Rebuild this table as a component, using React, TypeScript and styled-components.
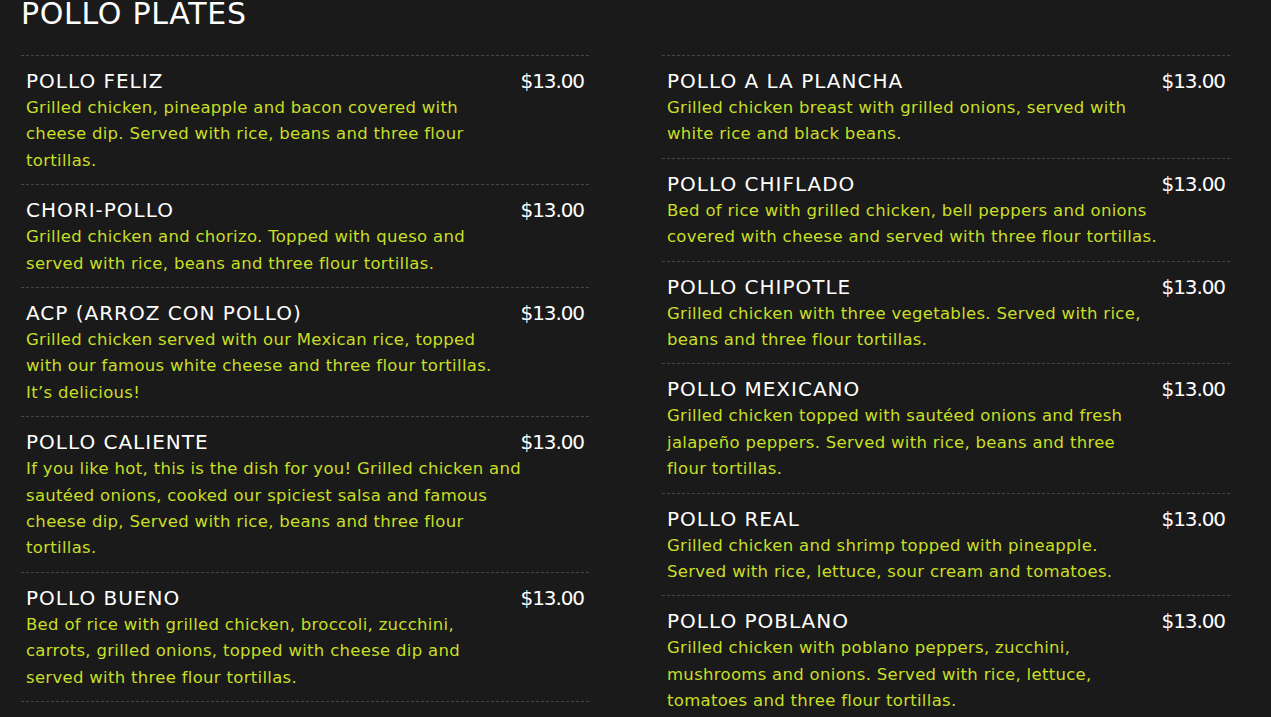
import React from "react";
import styled, { createGlobalStyle } from "styled-components";

type Plate = { name: string; price: string; lines: string[] };

const left: Plate[] = [
  {
    name: "POLLO FELIZ",
    price: "$13.00",
    lines: [
      "Grilled chicken, pineapple and bacon covered with",
      "cheese dip. Served with rice, beans and three flour",
      "tortillas.",
    ],
  },
  {
    name: "CHORI-POLLO",
    price: "$13.00",
    lines: [
      "Grilled chicken and chorizo. Topped with queso and",
      "served with rice, beans and three flour tortillas.",
    ],
  },
  {
    name: "ACP (ARROZ CON POLLO)",
    price: "$13.00",
    lines: [
      "Grilled chicken served with our Mexican rice, topped",
      "with our famous white cheese and three flour tortillas.",
      "It’s delicious!",
    ],
  },
  {
    name: "POLLO CALIENTE",
    price: "$13.00",
    lines: [
      "If you like hot, this is the dish for you! Grilled chicken and",
      "sautéed onions, cooked our spiciest salsa and famous",
      "cheese dip, Served with rice, beans and three flour",
      "tortillas.",
    ],
  },
  {
    name: "POLLO BUENO",
    price: "$13.00",
    lines: [
      "Bed of rice with grilled chicken, broccoli, zucchini,",
      "carrots, grilled onions, topped with cheese dip and",
      "served with three flour tortillas.",
    ],
  },
];

const right: Plate[] = [
  {
    name: "POLLO A LA PLANCHA",
    price: "$13.00",
    lines: [
      "Grilled chicken breast with grilled onions, served with",
      "white rice and black beans.",
    ],
  },
  {
    name: "POLLO CHIFLADO",
    price: "$13.00",
    lines: [
      "Bed of rice with grilled chicken, bell peppers and onions",
      "covered with cheese and served with three flour tortillas.",
    ],
  },
  {
    name: "POLLO CHIPOTLE",
    price: "$13.00",
    lines: [
      "Grilled chicken with three vegetables. Served with rice,",
      "beans and three flour tortillas.",
    ],
  },
  {
    name: "POLLO MEXICANO",
    price: "$13.00",
    lines: [
      "Grilled chicken topped with sautéed onions and fresh",
      "jalapeño peppers. Served with rice, beans and three",
      "flour tortillas.",
    ],
  },
  {
    name: "POLLO REAL",
    price: "$13.00",
    lines: [
      "Grilled chicken and shrimp topped with pineapple.",
      "Served with rice, lettuce, sour cream and tomatoes.",
    ],
  },
  {
    name: "POLLO POBLANO",
    price: "$13.00",
    lines: [
      "Grilled chicken with poblano peppers, zucchini,",
      "mushrooms and onions. Served with rice, lettuce,",
      "tomatoes and three flour tortillas.",
    ],
  },
];

const GlobalStyle = createGlobalStyle`
  html, body {
    margin: 0;
    padding: 0;
    background: #1a1a1a;
    overflow: hidden;
  }
  body {
    font-family: "DejaVu Sans", "Liberation Sans", sans-serif;
    color: #fff;
  }
`;

export default function App() {
  return (
    <>
      <GlobalStyle />
      <Page>
        <Heading>POLLO PLATES</Heading>
        <Columns>
          {[left, right].map((col, i) => (
            <List key={i}>
              {col.map((p) => (
                <Item key={p.name}>
                  <TopRow>
                    <Name>{p.name}</Name>
                    <Price>{p.price}</Price>
                  </TopRow>
                  <Desc>
                    {p.lines.map((l) => (
                      <Line key={l}>{l}</Line>
                    ))}
                  </Desc>
                </Item>
              ))}
            </List>
          ))}
        </Columns>
      </Page>
    </>
  );
}

const Page = styled.div`
  padding: 0 41px 0 21px;
`;

const Heading = styled.h1`
  margin: -4px 0 0;
  font-size: 30px;
  line-height: 36px;
  font-weight: normal;
  letter-spacing: 0.7px;
  color: #fff;
`;

const Columns = styled.div`
  display: grid;
  grid-template-columns: 568px 568px;
  column-gap: 73px;
  margin-top: 23px;
`;

const List = styled.div`
  display: flex;
  flex-direction: column;
`;

const Item = styled.div`
  border-top: 1px dashed #464646;
  padding: 11px 5px 10px;
  &:last-child {
    border-bottom: 1px dashed #464646;
  }
`;

const TopRow = styled.div`
  display: flex;
  justify-content: space-between;
  align-items: baseline;
`;

const Name = styled.div`
  font-size: 20px;
  line-height: 28px;
  letter-spacing: 1px;
  color: #fff;
`;

const Price = styled.div`
  font-size: 20px;
  line-height: 28px;
  color: #fff;
  letter-spacing: -1.1px;
`;

const Desc = styled.p`
  margin: 0;
  font-size: 16.5px;
  line-height: 26.4px;
  letter-spacing: 0.3px;
  color: #c8df26;
`;

const Line = styled.span`
  display: block;
  white-space: nowrap;
`;
